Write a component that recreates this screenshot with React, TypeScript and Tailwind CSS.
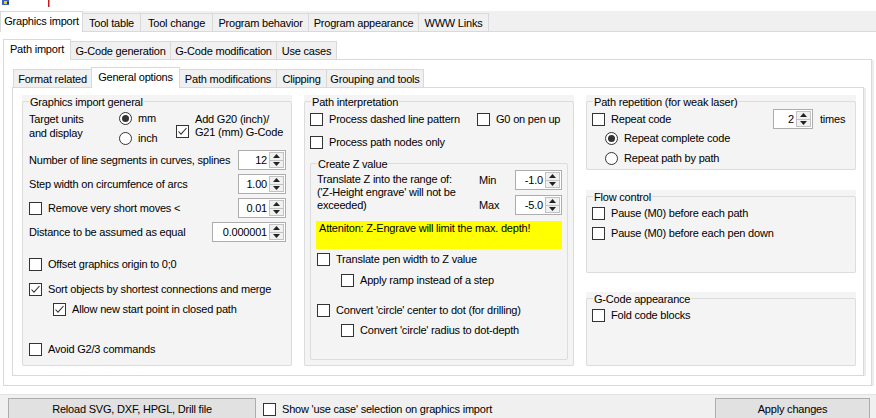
import React from 'react';

type Tab = { label: string; w: string };

const row1: Tab[] = [
  { label: 'Graphics import', w: 'w-[83px]' },
  { label: 'Tool table', w: 'w-[57px]' },
  { label: 'Tool change', w: 'w-[72px]' },
  { label: 'Program behavior', w: 'w-[96px]' },
  { label: 'Program appearance', w: 'w-[110px]' },
  { label: 'WWW Links', w: 'w-[71px]' },
];

const row2: Tab[] = [
  { label: 'Path import', w: 'w-[68px]' },
  { label: 'G-Code generation', w: 'w-[99px]' },
  { label: 'G-Code modification', w: 'w-[106px]' },
  { label: 'Use cases', w: 'w-[61px]' },
];

const row3: Tab[] = [
  { label: 'Format related', w: 'w-[78px]' },
  { label: 'General options', w: 'w-[89px]' },
  { label: 'Path modifications', w: 'w-[96px]' },
  { label: 'Clipping', w: 'w-[50px]' },
  { label: 'Grouping and tools', w: 'w-[98px]' },
];

const TabStrip = ({ tabs, selected, className = '' }: { tabs: Tab[]; selected: number; className?: string }) => (
  <div className={`flex h-[21px] items-end border-b border-[#d9d9d9] ${className}`}>
    {tabs.map((t, i) => {
      const last = i === tabs.length - 1;
      const afterSel = i === selected + 1;
      if (i === selected) {
        return (
          <div
            key={t.label}
            className={`relative z-10 -mb-px flex h-[21px] shrink-0 items-center justify-center whitespace-nowrap border border-b-0 border-[#d9d9d9] bg-white pb-[2px] ${t.w}`}
          >
            {t.label}
          </div>
        );
      }
      return (
        <div
          key={t.label}
          className={`flex h-[18px] shrink-0 items-center justify-center whitespace-nowrap border-t border-[#d9d9d9] bg-[#f0f0f0] ${afterSel ? '' : 'border-l'} ${last ? 'border-r' : ''} ${t.w}`}
        >
          {t.label}
        </div>
      );
    })}
  </div>
);

const Tick = () => (
  <svg width="11" height="11" viewBox="0 0 11 11">
    <polyline points="1.5,5.5 4,8.2 9.5,2" fill="none" stroke="#333" strokeWidth="1.1" />
  </svg>
);

const Box = ({ checked, className = '' }: { checked?: boolean; className?: string }) => (
  <span className={`flex h-[13px] w-[13px] shrink-0 items-center justify-center border border-[#333] bg-white ${className}`}>
    {checked && <Tick />}
  </span>
);

const Check = ({ label, checked, className = '' }: { label: string; checked?: boolean; className?: string }) => (
  <div className={`flex h-[14px] items-center whitespace-nowrap ${className}`}>
    <Box checked={checked} />
    <span className="ml-[6px]">{label}</span>
  </div>
);

const Radio = ({ label, checked, className = '' }: { label: string; checked?: boolean; className?: string }) => (
  <div className={`flex h-[14px] items-center whitespace-nowrap ${className}`}>
    <span className="flex h-[13px] w-[13px] shrink-0 items-center justify-center rounded-full border border-[#333] bg-white">
      {checked && <span className="h-[7px] w-[7px] rounded-full bg-[#333]" />}
    </span>
    <span className="ml-[6px]">{label}</span>
  </div>
);

const Num = ({ value, className = '' }: { value: string; className?: string }) => (
  <div className={`flex h-[20px] shrink-0 items-stretch border border-[#adadad] bg-white ${className}`}>
    <span className="flex-1 pr-[2px] text-right leading-[18px]">{value}</span>
    <span className="my-[1px] mr-[1px] flex w-[15px] flex-col border border-[#c2c2c2] bg-[#f0f0f0]">
      <span className="flex flex-1 items-center justify-center border-b border-[#c2c2c2]">
        <svg width="7" height="4" viewBox="0 0 7 4">
          <polygon points="0,4 3.5,0 7,4" fill="#222" />
        </svg>
      </span>
      <span className="flex flex-1 items-center justify-center">
        <svg width="7" height="4" viewBox="0 0 7 4">
          <polygon points="0,0 7,0 3.5,4" fill="#222" />
        </svg>
      </span>
    </span>
  </div>
);

const GroupBox = ({
  title,
  className = '',
  plain,
  children,
}: {
  title: string;
  className?: string;
  plain?: boolean;
  children?: React.ReactNode;
}) => (
  <div className={`relative shrink-0 pt-[6px] ${plain ? '' : 'bg-[#f4f4f4]'} ${className}`}>
    <div className="h-full rounded-[2px] border border-[#dcdcdc]">{children}</div>
    <span className="absolute left-[7px] top-0 whitespace-nowrap bg-[#f4f4f4] px-[1px] leading-[14px]">{title}</span>
  </div>
);

const Row = ({ children }: { children: React.ReactNode }) => (
  <div className="flex h-[20px] items-center justify-between whitespace-nowrap">{children}</div>
);

const ImportGeneral = () => (
  <GroupBox title="Graphics import general" className="h-[271px] w-[270px]">
    <div className="flex flex-col pl-[6px] pr-[5px]">
      <div className="mt-[9px] flex items-start">
        <div className="mt-[1px] w-[90px] leading-[14px]">
          Target units
          <br />
          and display
        </div>
        <div className="flex w-[57px] flex-col gap-[6px]">
          <Radio checked label="mm" />
          <Radio label="inch" />
        </div>
        <div className="flex items-start">
          <Box checked className="mt-[14px]" />
          <div className="ml-[6px] mt-[2px] whitespace-nowrap leading-[13px]">
            Add G20 (inch)/
            <br />
            G21 (mm) G-Code
          </div>
        </div>
      </div>

      <div className="mt-[5px] flex flex-col gap-[4px]">
        <Row>
          <span>Number of line segments in curves, splines</span>
          <Num value="12" className="w-[48px]" />
        </Row>
        <Row>
          <span>Step width on circumfence of arcs</span>
          <Num value="1.00" className="w-[48px]" />
        </Row>
        <Row>
          <Check label="Remove very short moves <" />
          <Num value="0.01" className="w-[48px]" />
        </Row>
        <Row>
          <span>Distance to be assumed as equal</span>
          <Num value="0.000001" className="w-[74px]" />
        </Row>
      </div>

      <Check className="mt-[15px]" label="Offset graphics origin to 0;0" />
      <Check className="mt-[11px]" checked label="Sort objects by shortest connections and merge" />
      <Check className="ml-[24px] mt-[6px]" checked label="Allow new start point in closed path" />
      <Check className="mt-[26px]" label="Avoid G2/3 commands" />
    </div>
  </GroupBox>
);

const PathInterpretation = () => (
  <GroupBox title="Path interpretation" className="h-[271px] w-[270px]">
    <div className="flex flex-col pl-[5px]">
      <div className="mt-[10px] flex">
        <Check className="w-[167px]" label="Process dashed line pattern" />
        <Check label="G0 on pen up" />
      </div>
      <Check className="mt-[9px]" label="Process path nodes only" />

      <GroupBox title="Create Z value" plain className="mt-[8px] h-[203px] w-[258px]">
        <div className="flex flex-col pl-[6px]">
          <div className="mt-[6px] flex items-start">
            <div className="mt-[3px] w-[162px] whitespace-nowrap leading-[13px]">
              Translate Z into the range of:
              <br />
              ('Z-Height engrave' will not be
              <br />
              exceeded)
            </div>
            <div className="flex flex-col gap-[5px]">
              <div className="flex h-[20px] items-center">
                <span className="w-[36px]">Min</span>
                <Num value="-1.0" className="w-[47px]" />
              </div>
              <div className="flex h-[20px] items-center">
                <span className="w-[36px]">Max</span>
                <Num value="-5.0" className="w-[47px]" />
              </div>
            </div>
          </div>
          <div className="-ml-px mt-[6px] h-[28px] w-[246px] whitespace-nowrap bg-[#ffff00] pl-[3px] pt-[1px] leading-[12px]">
            Atteniton: Z-Engrave will limit the max. depth!
          </div>
          <Check className="mt-[3px]" label="Translate pen width to Z value" />
          <Check className="ml-[24px] mt-[7px]" label="Apply ramp instead of a step" />
          <Check className="mt-[16px]" label="Convert 'circle' center to dot (for drilling)" />
          <Check className="ml-[24px] mt-[6px]" label="Convert 'circle' radius to dot-depth" />
        </div>
      </GroupBox>
    </div>
  </GroupBox>
);

const RightColumn = () => (
  <div className="flex w-[270px] shrink-0 flex-col">
    <GroupBox title="Path repetition (for weak laser)" className="h-[75px]">
      <div className="flex flex-col pl-[5px]">
        <div className="mt-[7px] flex h-[20px] items-center">
          <Check className="w-[181px]" label="Repeat code" />
          <Num value="2" className="w-[40px]" />
          <span className="ml-[7px]">times</span>
        </div>
        <Radio className="ml-[13px] mt-[2px]" checked label="Repeat complete code" />
        <Radio className="ml-[13px] mt-[6px]" label="Repeat path by path" />
      </div>
    </GroupBox>

    <GroupBox title="Flow control" className="mt-[20px] h-[83px]">
      <div className="flex flex-col pl-[5px]">
        <Check className="mt-[9px]" label="Pause (M0) before each path" />
        <Check className="mt-[6px]" label="Pause (M0) before each pen down" />
      </div>
    </GroupBox>

    <GroupBox title="G-Code appearance" className="mt-[19px] h-[74px]">
      <div className="flex flex-col pl-[5px]">
        <Check className="mt-[9px]" label="Fold code blocks" />
      </div>
    </GroupBox>
  </div>
);

export default function App() {
  return (
    <div className="flex h-[418px] w-[876px] flex-col overflow-hidden bg-white font-['Liberation_Sans',Arial,sans-serif] text-[11px] leading-[14px] tracking-[-0.2px] text-black">
      {/* cropped title bar */}
      <div className="h-[11px] shrink-0 bg-white">
        <svg width="60" height="11" className="block">
          <rect x="2" y="0" width="7" height="5" fill="#3b5fc9" />
          <rect x="4" y="1" width="3" height="3" fill="#e6d400" />
          <rect x="7" y="2" width="2" height="2" fill="#1d2f8a" />
          <rect x="48" y="0" width="1.5" height="7" fill="#c81818" />
        </svg>
      </div>

      <div className="shrink-0 bg-[#f0f0f0]">
        <TabStrip tabs={row1} selected={0} />
      </div>

      <div className="h-[362px] shrink-0 bg-white pl-[3px] pt-[7px]">
        <div className="w-[869px]">
          <TabStrip tabs={row2} selected={0} />
          <div className="h-[326px] border border-t-0 border-[#d9d9d9] pl-[8px] pt-[7px] shadow-[2px_0_0_0_#ececec]">
            <div className="w-[852px]">
              <TabStrip tabs={row3} selected={1} className="pl-[1px]" />
              <div className="flex h-[288px] gap-[12px] border border-t-0 border-[#d9d9d9] pl-[9px] pt-[7px] shadow-[2px_0_0_0_#ececec]">
                <ImportGeneral />
                <PathInterpretation />
                <RightColumn />
              </div>
            </div>
          </div>
        </div>
      </div>

      <div className="flex h-[24px] shrink-0 items-start border-t border-[#e3e3e3] bg-[#f0f0f0] pt-[3px]">
        <button className="ml-[8px] flex h-[23px] w-[248px] shrink-0 items-center justify-center border border-[#adadad] bg-[#e1e1e1] pb-[1px]">
          Reload SVG, DXF, HPGL, Drill file
        </button>
        <Check className="ml-[7px] mt-[4px]" label="Show 'use case' selection on graphics import" />
        <button className="ml-auto mr-[6px] flex h-[23px] w-[155px] shrink-0 items-center justify-center border border-[#adadad] bg-[#e1e1e1] pb-[1px]">
          Apply changes
        </button>
      </div>
    </div>
  );
}
